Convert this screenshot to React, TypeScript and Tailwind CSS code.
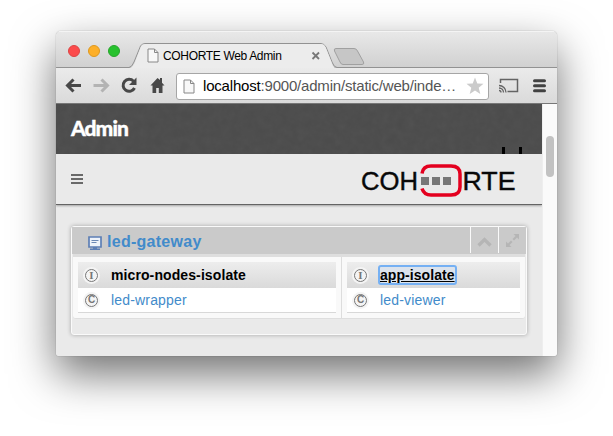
import React from "react";

const sans = "font-['Liberation_Sans',Arial,sans-serif]";

function PageIcon({ className }: { className: string }) {
  return (
    <svg className={className} viewBox="0 0 12 15" fill="none">
      <path d="M1 1h6.5L11 4.5V14H1z" fill="#f8f8f8" stroke="#888" />
      <path d="M7.5 1v3.5H11" stroke="#888" />
    </svg>
  );
}

function TabStrip() {
  return (
    <div className="relative h-[37px] shrink-0 bg-linear-to-b from-[#e9e9e9] to-[#d0d0d0]">
      <svg className="absolute inset-0" width="501" height="37" viewBox="0 0 501 37" fill="none">
        <path d="M0 .5H501" stroke="#f4f4f4" />
        <path d="M0 36.5H73Q76 36 78 31L84.500 15Q86 12.500 89 12.500H265Q268 12.500 270 16L276 31Q278 36.500 281 36.500H501V37H0Z" fill="none" stroke="#929292" />
        <path d="M74 37Q77 36 79 31L85 15.500Q86 13 89 13H265Q268 13 269.500 16L275.500 31Q277 37 280 37Z" fill="#ececec" />
        <path d="M225 17M280 17.500H298Q300.500 17.500 301.500 20L307.500 31Q308.500 33.500 306 33.500H287Q285 33.500 284 31L278.500 20Q277.500 17.500 280 17.500Z" fill="#c6c6c6" stroke="#a0a0a0" />
        <path d="M256.500 21.500l6.500 6.500M263 21.500l-6.500 6.500" stroke="#777" strokeWidth="1.800" />
      </svg>
      <div className="relative flex h-full items-center">
        <div className="flex gap-2 pl-3 pt-[3px]">
          <span className="size-3 rounded-full border border-[#dc4444] bg-[#fc4b4c]" />
          <span className="size-3 rounded-full border border-[#de981e] bg-[#fdaf28]" />
          <span className="size-3 rounded-full border border-[#27a52c] bg-[#27c22e]" />
        </div>
        <PageIcon className="ml-[27px] mt-[12px] h-[15px] w-3" />
        <span className={`${sans} ml-[4px] mt-[13px] whitespace-nowrap text-[12px] leading-4 tracking-[-0.34px] text-black`}>COHORTE Web Admin</span>
      </div>
    </div>
  );
}

function Toolbar() {
  return (
    <div className="flex h-[36px] shrink-0 items-center border-b border-[#777] bg-linear-to-b from-[#ebebeb] to-[#dadada]">
      <svg className="h-[35px] w-[120px] shrink-0" viewBox="0 0 120 35" fill="none" strokeWidth="3">
        <path d="M25 17.500H12M17.500 11.500l-6 6 6 6" stroke="#484848" />
        <path d="M37.500 17.500H51M45.500 11.500l6 6-6 6" stroke="#b3b3b3" />
        <path d="M77.500 13.200A6 6 0 1 0 78.500 20" stroke="#484848" />
        <path d="M80.500 9.500v7.500h-7.500z" fill="#484848" />
        <path d="M101.500 10L94.500 17.500h2V25h3.700v-5h2.600v5h3.700v-7.500h2l-2.500-2.700V10h-2v2z" fill="#484848" />
      </svg>
      <div className="mt-px flex h-[27px] w-[313px] shrink-0 items-center rounded-[3px] border-[1.5px] border-[#a6a6a6] bg-white pl-[6px] pr-[4px]">
        <PageIcon className="h-[15px] w-3 shrink-0" />
        <span className={`${sans} ml-[8px] w-[255px] whitespace-nowrap text-[15px] leading-5 tracking-[-0.19px] text-[#555]`}>
          <span className="text-black">localhost</span>:9000/admin/static/web/inde…
        </span>
        <svg className="ml-auto size-[18px] shrink-0" viewBox="0 0 18 18">
          <path d="M9 .5l2.300 5.900 6.200.3-4.800 4 1.600 6.300L9 13.600 3.700 17l1.600-6.300-4.800-4 6.200-.3z" fill="#cbcbcb" />
        </svg>
      </div>
      <svg className="h-[35px] w-[66px] shrink-0" viewBox="0 0 66 35" fill="none">
        <path d="M11.500 15V11.500h17v12h-10" stroke="#646464" strokeWidth="1.500" />
        <path d="M10 17.500a7 7 0 0 1 7 7M10 20a4.500 4.500 0 0 1 4.500 4.500M10 22.500a2 2 0 0 1 2 2" stroke="#646464" strokeWidth="1.300" />
        <path d="M45.500 12.700h10M45.500 17.700h10M45.500 22.700h10" stroke="#424242" strokeWidth="3" strokeLinecap="round" />
      </svg>
    </div>
  );
}

function Logo() {
  return (
    <svg className="mt-[3px] h-[36px] w-[156px]" viewBox="0 0 156 36" fill="none">
      <text x="0" y="27" textLength="57" lengthAdjust="spacingAndGlyphs" fill="#080808" stroke="#080808" strokeWidth="0.400" className="font-['Liberation_Sans',Arial,sans-serif] text-[25px]">COH</text>
      <path d="M61 10.500Q62 3 70 3H90Q99 3 99 11V24Q99 32 90 32H70Q63 32 61 25.500" stroke="#e4001f" strokeWidth="3.500" />
      <path d="M60 14h8v8h-8zM71 14h8v8h-8zM82 14h8v8h-8z" fill="#777" />
      <text x="101.500" y="27" textLength="53" lengthAdjust="spacingAndGlyphs" fill="#080808" stroke="#080808" strokeWidth="0.400" className="font-['Liberation_Sans',Arial,sans-serif] text-[25px]">RTE</text>
    </svg>
  );
}

function Badge({ letter }: { letter: "I" | "C" }) {
  return (
    <span className="flex size-[17px] shrink-0 items-center justify-center rounded-full bg-[#f4f4f4]">
      <span className={`flex size-[13px] items-center justify-center rounded-full border border-[#777] font-bold leading-none text-[#777] ${letter === "I" ? "font-['Liberation_Serif',serif] text-[11px]" : "font-['Liberation_Sans',sans-serif] text-[10px]"}`}>
        {letter}
      </span>
    </span>
  );
}

function Isolate({ name, component, focused, className }: { name: string; component: string; focused?: boolean; className: string }) {
  return (
    <div className={`${sans} ${className} text-[14px] leading-[18px]`}>
      <div className="flex h-[26px] items-center bg-linear-to-b from-[#ededed] to-[#dadada] pl-[5px]">
        <Badge letter="I" />
        <span className={`ml-[11px] whitespace-nowrap font-bold text-black ${focused ? "rounded-[1px] bg-[#dce3ec] leading-[16px] tracking-[0.06px] underline outline-2 outline-[#75b0f3]" : "tracking-[0.1px]"}`}>{name}</span>
      </div>
      <div className="flex h-[25px] items-center border-b border-[#d8d8d8] bg-white pl-[5px]">
        <Badge letter="C" />
        <span className="ml-[11px] whitespace-nowrap tracking-[0.17px] text-[#428bca]">{component}</span>
      </div>
    </div>
  );
}

function GatewayPanel() {
  return (
    <div className="ml-[15px] mt-[21px] h-[109px] w-[456px] rounded-[3px] border border-[#fafafa] bg-[#eaeaea] shadow-[0_0_4px_rgba(0,0,0,0.3)]">
      <div className="flex h-[27px] bg-[#cacaca]">
        <svg className="ml-[16px] mt-[9px] h-[14px] w-[14px]" viewBox="0 0 14 14">
          <path d="M1 1h12v10H1z" fill="#eef3fa" stroke="#5d7fb5" strokeWidth="1.700" />
          <path d="M3.500 4.500h7M3.500 6.500h5" stroke="#6c89b5" />
          <path d="M5 11h4v1.500h3V14H2v-1.500h3z" fill="#5d7fb5" />
        </svg>
        <span className={`${sans} ml-[5px] mt-[5px] whitespace-nowrap text-[16px] font-bold leading-5 tracking-[0.27px] text-[#428bca]`}>led-gateway</span>
        <div className="ml-auto flex h-[26px]">
          <span className="flex w-[28px] items-center justify-center border-l border-[#fafafa]">
            <svg className="mt-1 h-[11px] w-[15px]" viewBox="0 0 15 11"><path d="M1.500 8.500l6-6 6 6" fill="none" stroke="#b5b5b5" strokeWidth="3.300" /></svg>
          </span>
          <span className="flex w-[28px] items-center justify-center border-l border-[#fafafa]">
            <svg className="mt-px size-[15px]" viewBox="0 0 15 15" fill="#b5b5b5"><path d="M8.500 1H14v5.500l-2-2L9 7.500 7.500 6l3-3zM6.500 14H1V8.500l2 2 3-3L7.500 9l-3 3z" /></svg>
          </span>
        </div>
      </div>
      <div className="mx-px flex h-[65px] rounded-b-[3px] border-b border-t-[3px] border-[#dedede] bg-[#f9f9f9]">
        <div className="w-[269px] shrink-0 border-r border-[#dddddd] pl-[5px] pt-[5px]">
          <Isolate name="micro-nodes-isolate" component="led-wrapper" className="w-[258px]" />
        </div>
        <div className="pl-[5px] pt-[5px]">
          <Isolate name="app-isolate" component="led-viewer" focused className="w-[173px]" />
        </div>
      </div>
    </div>
  );
}

export default function App() {
  return (
    <div className="h-[436px] w-[613px] overflow-hidden bg-white pl-[56px] pt-[31px]">
      <div className="flex h-[325px] w-[501px] rounded-b-[3px] rounded-t-[5px] shadow-[0_0_1px_rgba(0,0,0,0.5),0_18px_44px_rgba(0,0,0,0.56)]">
        <div className="flex w-full flex-col overflow-hidden rounded-b-[3px] rounded-t-[5px]">
          <TabStrip />
          <Toolbar />
          <div className="flex min-h-0 flex-1">
            <main className="w-[486px] bg-[#eaeaea]">
              <header className="relative flex h-[50px] items-center bg-[#4b4b4b] pl-[15px]">
                <svg className="absolute inset-0 opacity-[0.05]" width="486" height="50">
                  <filter id="grain"><feTurbulence type="fractalNoise" baseFrequency="0.120" numOctaves="3" /><feColorMatrix type="saturate" values="0" /></filter>
                  <rect width="486" height="50" filter="url(#grain)" />
                </svg>
                <h1 className="relative -mt-[2px] font-['Lato',sans-serif] text-[21px] font-black leading-6 tracking-[-0.95px] text-white [-webkit-text-stroke:0.4px_white]">Admin</h1>
                <span className="absolute bottom-0 right-[20px] flex h-[7px] w-[20px] justify-between">
                  <span className="w-[3px] bg-black" />
                  <span className="w-[3px] bg-black" />
                </span>
              </header>
              <nav className="flex h-[51px] items-center justify-between border-b border-[#646464] pl-[15px] pr-[25px] shadow-[0_1px_2px_rgba(0,0,0,0.3)]">
                <div className="flex w-3 flex-col gap-[2px]">
                  <span className="h-[2px] bg-[#696969]" />
                  <span className="h-[2px] bg-[#696969]" />
                  <span className="h-[2px] bg-[#696969]" />
                </div>
                <Logo />
              </nav>
              <GatewayPanel />
            </main>
            <aside className="w-[15px] border-l border-[#eeeeee] bg-[#fafafa] pl-[3px] pt-[32px]">
              <div className="h-[41px] w-[8px] rounded-full bg-[#c2c2c2]" />
            </aside>
          </div>
        </div>
      </div>
    </div>
  );
}
